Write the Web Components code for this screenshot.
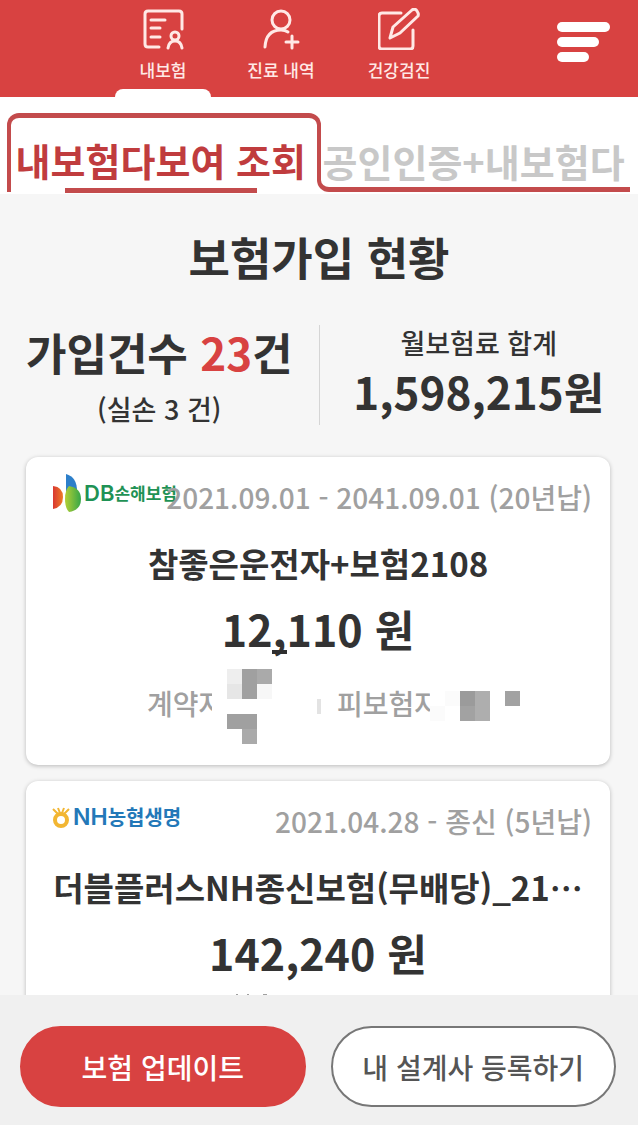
<!DOCTYPE html>
<html lang="ko">
<head>
<meta charset="utf-8">
<meta name="viewport" content="width=device-width, initial-scale=1">
<title>내보험</title>
<style>
	body {
		margin: 0;
		font-family: "Noto Sans CJK KR", "Noto Sans", sans-serif;
		color: #333;
		--red: #d84241;
		--line: #c34b4c;
		--muted: #a0a0a0;
	}
</style>
</head>
<body>
<insurance-app></insurance-app>

<script>
const define = (name, template, setup) => {
	customElements.define(
		name,
		class extends HTMLElement {
			connectedCallback() {
				if (this.shadowRoot) return;
				this.attachShadow({ mode: "open" });
				this.shadowRoot.innerHTML = template;
				if (setup) setup(this, this.shadowRoot);
			}
		}
	);
};

define("nav-item", `
	<style>
		:host {
			display: block;
			width: 118px;
		}
		a {
			display: flex;
			flex-direction: column;
			align-items: center;
			padding-top: 8px;
			color: #ffe9e6;
			text-decoration: none;
			font-size: 17px;
			font-weight: 500;
			line-height: 24px;
		}
		::slotted(svg) {
			display: block;
			width: 42px;
			height: 42px;
			margin-bottom: 8px;
			fill: none;
			stroke: #ffe9e6;
			stroke-width: 3;
			stroke-linecap: round;
			stroke-linejoin: round;
		}
		i {
			width: 96px;
			height: 8px;
			margin-top: 7px;
			border-radius: 8px 8px 0 0;
		}
		:host([active]) i {
			background: #fff;
		}
	</style>
	<a href="#"><slot name="icon"></slot><slot></slot><i></i></a>
`);

define("app-header", `
	<style>
		:host {
			display: flex;
			justify-content: space-between;
			align-items: flex-start;
			flex: none;
			padding: 0 28px 0 104px;
			background: var(--red);
		}
		nav {
			display: flex;
		}
		button {
			margin: 22px 0 0;
			padding: 0;
			border: 0;
			background: none;
		}
		button svg {
			display: block;
			fill: #fff;
		}
	</style>
	<nav>
		<nav-item active>
			<svg slot="icon" viewBox="0 0 42 42"><path d="M17 39H6q-3 0-3-3V6q0-3 3-3h31q3 0 3 3v15M9 12h14M9 20h9M9 29h9"/><circle cx="33" cy="28" r="4"/><path d="M26 40q1-7 7-7t7 7"/></svg>
			내보험
		</nav-item>
		<nav-item>
			<svg slot="icon" viewBox="0 0 42 42"><circle cx="21" cy="12" r="9"/><path d="M5 39Q6 22 21 22q4 0 7 2M32 28v12M26 34h12"/></svg>
			진료 내역
		</nav-item>
		<nav-item>
			<svg slot="icon" viewBox="0 0 42 42"><path d="M23 5H4q-3 0-3 3v30q0 3 3 3h28q3 0 3-3V22M12 30l3-11L34 2q3-2 5 1t1 5L22 25z"/></svg>
			건강검진
		</nav-item>
	</nav>
	<button type="button" aria-label="메뉴">
		<svg width="53" height="40"><rect width="53" height="10" rx="5"/><rect y="15" width="42" height="10" rx="5"/><rect y="30" width="32" height="10" rx="5"/></svg>
	</button>
`);

define("view-tabs", `
	<style>
		:host {
			display: flex;
			flex: none;
			padding: 16px 8px 2px 7px;
			background: #fff;
		}
		button {
			position: relative;
			flex: 1 1 0;
			min-width: 0;
			height: 79px;
			margin: 0;
			padding: 19px 0 0;
			border: 0;
			background: none;
			font: bold 38px/56px "Noto Sans CJK KR", sans-serif;
			white-space: nowrap;
			color: #c8c8c8;
		}
		button.on {
			display: flex;
			flex-direction: column;
			align-items: center;
			flex-basis: 6px;
			padding-right: 6px;
			color: #c03c3e;
		}
		/* the frame runs over the first tab and on below the second */
		.on:before, .on:after, .next:before {
			content: "";
			position: absolute;
			top: 0;
			border: 0 solid var(--line);
			box-sizing: border-box;
		}
		.on:before {
			left: 0;
			right: 16px;
			bottom: 0;
			border-top-width: 5px;
			border-left-width: 4px;
			border-top-left-radius: 12px;
		}
		.on:after {
			right: 0;
			bottom: 14px;
			width: 16px;
			border-top-width: 5px;
			border-right-width: 4px;
			border-top-right-radius: 12px;
		}
		.on span {
			flex: none;
		}
		.on i {
			flex: none;
			width: 192px;
			height: 5px;
			background: var(--line);
		}
		button.next {
			margin-left: -4px;
			padding-top: 17px;
			padding-left: 6px;
			text-align: left;
		}
		.next:before {
			top: 60px;
			left: 0;
			right: 0;
			bottom: 0;
			border-left-width: 4px;
			border-bottom-width: 5px;
			border-bottom-left-radius: 12px;
		}
	</style>
	<button type="button" class="on"><span>내보험다보여 조회</span><i></i></button>
	<button type="button" class="next">공인인증+내보험다</button>
`);

define("policy-summary", `
	<style>
		:host {
			display: block;
			text-align: center;
		}
		h1 {
			margin: 0;
			padding: 30px 0 36px;
			font-size: 45px;
			font-weight: bold;
			line-height: 65px;
		}
		div {
			display: flex;
		}
		section {
			flex: 1;
			height: 100px;
		}
		section + section {
			border-left: 1px solid #d5d5d5;
		}
		p {
			margin: 0;
			font-size: 27px;
			font-weight: 500;
			line-height: 36px;
		}
		p.big {
			font-size: 44px;
			font-weight: bold;
			line-height: 60px;
		}
		p.count {
			margin-bottom: 12px;
			line-height: 54px;
		}
		em {
			font-style: normal;
			color: var(--red);
		}
	</style>
	<h1>보험가입 현황</h1>
	<div>
		<section><p class="big count">가입건수 <em>23</em>건</p><p>(실손 3 건)</p></section>
		<section><p>월보험료 합계</p><p class="big">1,598,215원</p></section>
	</div>
`);

define("policy-card", `
	<style>
		:host {
			display: block;
			padding: 18px 18px 21px 26px;
			border-radius: 12px;
			background: #fff;
			box-shadow: 0 1px 4px rgba(0, 0, 0, .25);
		}
		header {
			display: flex;
			justify-content: space-between;
			align-items: center;
			height: 44px;
		}
		::slotted([slot=logo]) {
			min-width: 0;
		}
		time {
			position: relative;
			flex: none;
			font-size: 28px;
			font-weight: 500;
			white-space: pre;
			color: var(--muted);
		}
		h2, p {
			margin: 0 8px 0 0;
			text-align: center;
			font-weight: bold;
			white-space: nowrap;
		}
		h2 {
			margin-top: 19px;
			font-size: 33px;
			line-height: 50px;
		}
		p {
			margin-top: 8px;
			font-size: 43px;
			line-height: 64px;
		}
		footer {
			display: flex;
			align-items: center;
			height: 75px;
			margin-top: 9px;
			padding-left: 95px;
		}
	</style>
	<header><slot name="logo"></slot><time></time></header>
	<h2></h2>
	<p></p>
	<footer><slot></slot></footer>
`, (host, root) => {
	root.querySelector("time").textContent = host.getAttribute("period");
	root.querySelector("h2").textContent = host.getAttribute("name");
	root.querySelector("p").textContent = host.getAttribute("price");
});

define("company-logo", `
	<style>
		:host {
			display: block;
		}
		div {
			display: flex;
			align-items: center;
			padding-bottom: 8px;
			white-space: nowrap;
			font-size: 17px;
			font-weight: bold;
			line-height: 24px;
			color: #1f9255;
		}
		b {
			font: 600 22px/24px Inter, "Liberation Sans", sans-serif;
		}
		svg, b, span {
			flex: none;
		}
		:host([kind=nh]) div {
			font-size: 20px;
			color: #2378b8;
		}
		:host([kind=nh]) b {
			font-size: 23px;
		}
	</style>
	<div></div>
`, (host, root) => {
	root.querySelector("div").innerHTML = host.getAttribute("kind") === "nh"
		? `<svg width="21" height="22" viewBox="0 0 21 22"><g fill="none" stroke="#f2b632"><circle cx="9" cy="14" r="6" stroke-width="4"/><path d="M1 3l5 5M6 2l2 5M12 2l-2 5M17 3l-5 5" stroke-width="2"/></g></svg><b>NH</b><span>농협생명</span>`
		: `<svg width="32" height="40" viewBox="0 0 32 40"><defs><linearGradient id="r"><stop stop-color="#d93832"/><stop offset="1" stop-color="#ee7b25"/></linearGradient><linearGradient id="g"><stop stop-color="#b3cf35"/><stop offset="1" stop-color="#35a648"/></linearGradient></defs><path d="M14 1q11 3 11 17l-11 8z" fill="#2d7fca"/><path d="M1 13q10 1 10 11T1 36z" fill="url(#r)"/><path d="M17 13q12 2 12 13T17 39q-4-4-4-13t4-13z" fill="url(#g)"/></svg><b>DB</b><span>손해보험</span>`;
});

define("party-label", `
	<style>
		:host {
			display: block;
			flex: none;
			width: 65px;
			font-size: 28px;
			font-weight: 500;
			line-height: 38px;
			padding-bottom: 8px;
			white-space: nowrap;
			color: var(--muted);
		}
		:host([wide]) {
			width: 93px;
			margin-left: 16px;
		}
	</style>
	<slot></slot>
`);

define("action-bar", `
	<style>
		:host {
			display: flex;
			flex: none;
			gap: 25px;
			padding: 31px 22px 18px 20px;
			background: #f0f0f0;
		}
		button {
			flex: 1;
			min-width: 0;
			height: 81px;
			padding: 0;
			border: 2px solid var(--red);
			border-radius: 41px;
			background: var(--red);
			font: 500 28px/42px "Noto Sans CJK KR", sans-serif;
			color: #fff;
		}
		button + button {
			border-color: #777;
			background: #fff;
			color: #555;
		}
	</style>
	<button type="button">보험 업데이트</button>
	<button type="button">내 설계사 등록하기</button>
`);

define("insurance-app", `
	<style>
		:host {
			display: flex;
			flex-direction: column;
			height: 100vh;
			background: #f6f6f6;
		}
		main {
			flex: 1;
			min-height: 0;
			overflow-y: auto;
			scrollbar-width: none;
		}
		.cards {
			display: flex;
			flex-direction: column;
			gap: 16px;
			padding: 32px 28px 24px 26px;
		}
		/* hides the person's name and the end of the label before it */
		.mask {
			position: relative;
			flex: none;
			overflow: visible;
			background: #fff;
		}
		.bar {
			flex: none;
			width: 4px;
			height: 15px;
			margin-left: 15px;
			background: #e3e3e3;
		}
	</style>
	<app-header></app-header>
	<view-tabs></view-tabs>
	<main>
		<policy-summary></policy-summary>
		<div class="cards">
			<policy-card period="2021.09.01 - 2041.09.01 (20년납)" name="참좋은운전자+보험2108" price="12,110 원">
				<company-logo slot="logo" kind="db"></company-logo>
				<party-label>계약자</party-label>
				<svg class="mask" width="90" height="75" shape-rendering="crispEdges">
					<path d="M60-19h15v4H60z" fill="#2f2f2f"/>
					<path d="M15 0h15v15H15z" fill="#eee"/>
					<path d="M15 15h15v15H15z" fill="#e6e6e6"/>
					<path d="M45 15h15v15H45z" fill="#f7f7f7"/>
					<path d="M30 0h15v30H30zM15 45h30v15H15z" fill="#a0a0a0"/>
					<path d="M45 0h15v15H45zM30 60h15v15H30z" fill="#aaa"/>
				</svg>
				<span class="bar"></span>
				<party-label wide>피보험자</party-label>
				<svg class="mask" width="90" height="75" shape-rendering="crispEdges">
					<path d="M15 22h15v15H15zM0 37h15v15H0z" fill="#fbfbfb"/>
					<path d="M30 22h15v15H30z" fill="#9b9b9b"/>
					<path d="M45 22h15v30H45z" fill="#aeaeae"/>
					<path d="M30 37h15v15H30zM75 22h15v15H75z" fill="#a2a2a2"/>
				</svg>
			</policy-card>
			<policy-card period="2021.04.28 - 종신 (5년납)" name="더블플러스NH종신보험(무배당)_21…" price="142,240 원">
				<company-logo slot="logo" kind="nh"></company-logo>
				<svg class="mask" width="200" height="75">
					<path d="M90 1v6M101 1v6M116 2h4" fill="none" stroke="#a0a0a0" stroke-width="2"/>
				</svg>
			</policy-card>
		</div>
	</main>
	<action-bar></action-bar>
`);
</script>
</body>
</html>
